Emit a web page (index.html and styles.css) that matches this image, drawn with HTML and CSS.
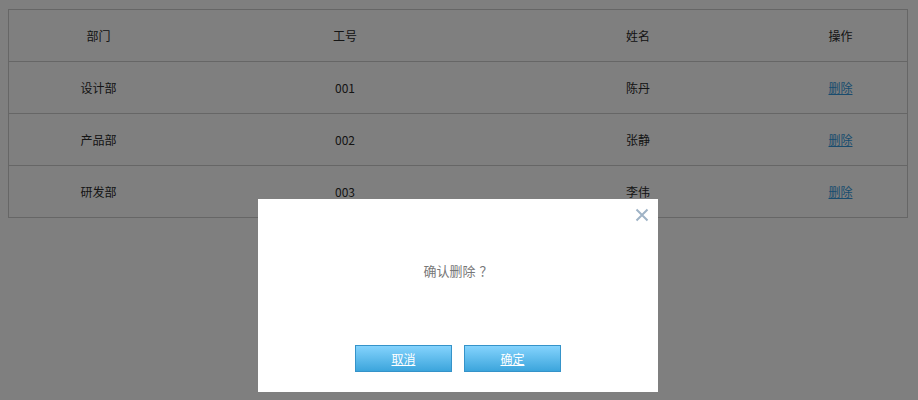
FILE: index.html
```html
<!DOCTYPE html>
<html lang="zh-CN">
<head>
    <meta charset="UTF-8">
    <title>员工列表</title>
    <link rel="stylesheet" href="styles.css">
</head>
<body>

    <div class="staff-table">
        <div class="row head">
            <div class="cell">部门</div>
            <div class="cell">工号</div>
            <div class="cell">姓名</div>
            <div class="cell">操作</div>
        </div>
        <div class="row">
            <div class="cell">设计部</div>
            <div class="cell">001</div>
            <div class="cell">陈丹</div>
            <div class="cell"><a href="#">删除</a></div>
        </div>
        <div class="row">
            <div class="cell">产品部</div>
            <div class="cell">002</div>
            <div class="cell">张静</div>
            <div class="cell"><a href="#">删除</a></div>
        </div>
        <div class="row">
            <div class="cell">研发部</div>
            <div class="cell">003</div>
            <div class="cell">李伟</div>
            <div class="cell"><a href="#">删除</a></div>
        </div>
    </div>

    <div class="mask"></div>

    <div class="dialog">
        <a class="close" href="#">
            <svg width="14" height="14" viewBox="0 0 14 14">
                <path d="M1.5 1.5 L12.5 12.5 M12.5 1.5 L1.5 12.5" stroke="#9fb3c6" stroke-width="2" fill="none"/>
            </svg>
        </a>
        <p class="msg">确认删除<span class="q">？</span></p>
        <div class="btns">
            <a class="btn" href="#">取消</a>
            <a class="btn" href="#">确定</a>
        </div>
    </div>

</body>
</html>
```

FILE: styles.css
```css
body {
    margin: 0;
    padding: 9px 8px;
    background: #fff;
    font-family: "Noto Sans CJK SC", "Liberation Sans", sans-serif;
    font-size: 12px;
    color: #2a2a2a;
}
.staff-table {
    width: 898px;
    border: 1px solid #ccc;
}
.row {
    display: grid;
    grid-template-columns: 179px 314px 272px 133px;
    height: 51px;
    border-top: 1px solid #ccc;
}
.row.head {
    border-top: none;
}
.cell {
    display: flex;
    align-items: center;
    justify-content: center;
}
.cell a {
    color: #3399dd;
}
.mask {
    position: fixed;
    left: 0;
    top: 0;
    right: 0;
    bottom: 0;
    background: rgba(0, 0, 0, 0.5);
}
.dialog {
    position: fixed;
    left: 258px;
    top: 199px;
    width: 400px;
    height: 193px;
    background: #fff;
    display: flex;
    flex-direction: column;
    align-items: center;
}
.close {
    position: absolute;
    right: 9px;
    top: 9px;
    width: 14px;
    height: 14px;
    line-height: 0;
}
.msg {
    margin: 62px 0 0;
    font-size: 13px;
    color: #777;
    line-height: 20px;
}
.msg .q {
    margin-left: 4px;
}
.btns {
    display: flex;
    gap: 12px;
    margin-top: 64px;
}
.btn {
    display: block;
    width: 95px;
    height: 25px;
    line-height: 25px;
    text-align: center;
    border: 1px solid #3593c9;
    background: linear-gradient(#84d3fd, #3ca5dc);
    color: #fff;
    font-size: 12px;
}
```
